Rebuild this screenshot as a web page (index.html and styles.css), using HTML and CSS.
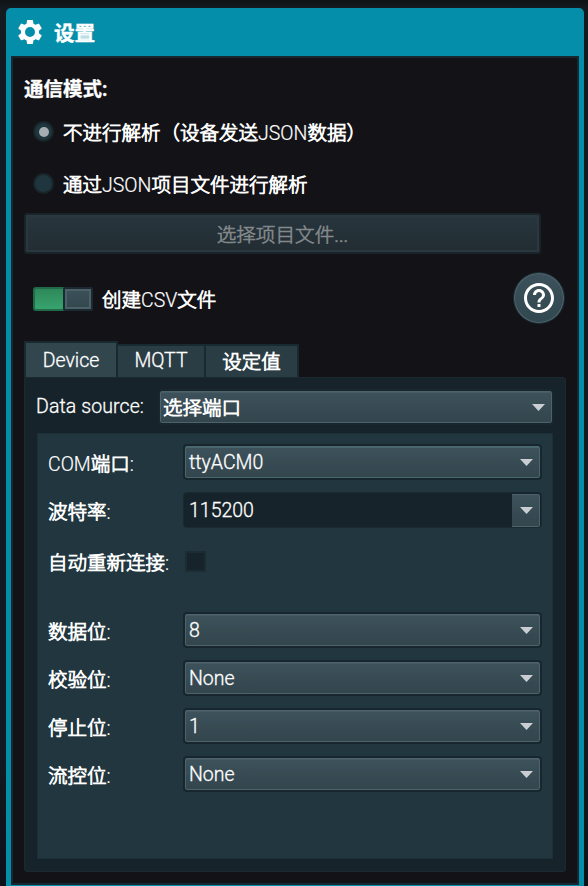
FILE: index.html
```html
<!DOCTYPE html>
<html lang="zh-CN">
<head>
<meta charset="utf-8">
<title>设置</title>
<link rel="stylesheet" href="styles.css">
</head>
<body>
<main class="window">
  <header class="titlebar">
    <svg class="gear" viewBox="0 0 24 24"><path d="M19.14 12.94c.04-.3.06-.61.06-.94 0-.32-.02-.64-.07-.94l2.03-1.58a.49.49 0 0 0 .12-.61l-1.92-3.32a.488.488 0 0 0-.59-.22l-2.39.96c-.5-.38-1.03-.7-1.62-.94l-.36-2.54a.484.484 0 0 0-.48-.41h-3.84c-.24 0-.43.17-.47.41l-.36 2.54c-.59.24-1.13.57-1.62.94l-2.39-.96c-.22-.08-.47 0-.59.22L2.74 8.87c-.12.21-.08.47.12.61l2.03 1.58c-.05.3-.09.63-.09.94s.02.64.07.94l-2.03 1.58a.49.49 0 0 0-.12.61l1.92 3.32c.12.22.37.29.59.22l2.39-.96c.5.38 1.03.7 1.62.94l.36 2.54c.05.24.24.41.48.41h3.84c.24 0 .44-.17.47-.41l.36-2.54c.59-.24 1.13-.56 1.62-.94l2.39.96c.22.08.47 0 .59-.22l1.92-3.32c.12-.22.07-.47-.12-.61l-2.01-1.58zM12 16a4 4 0 1 1 0-8 4 4 0 0 1 0 8z"/></svg>
    <h1 class="title">设置</h1>
  </header>
  <section class="body">
    <h2 class="heading">通信模式:</h2>
    <div class="radio-row"><span class="radio checked"></span><span class="cjk">不进行解析（设备发送<b>JSON</b>数据）</span></div>
    <div class="radio-row"><span class="radio"></span><span class="cjk">通过<b>JSON</b>项目文件进行解析</span></div>
    <div class="file-button">选择项目文件...</div>
    <div class="csv-row">
      <span class="switch"><span class="knob"></span></span>
      <span class="cjk csv-label">创建<b>CSV</b>文件</span>
      <span class="help"><svg viewBox="0 0 24 24"><path d="M11 18h2v-2h-2v2zm1-16C6.48 2 2 6.48 2 12s4.48 10 10 10 10-4.480 10-10S17.520 2 12 2zm0 18c-4.410 0-8-3.590-8-8s3.590-8 8-8 8 3.590 8 8-3.590 8-8 8zm0-14c-2.210 0-4 1.790-4 4h2c0-1.100.900-2 2-2s2 .900 2 2c0 2-3 1.750-3 5h2c0-2.250 3-2.500 3-5 0-2.210-1.790-4-4-4z"/></svg></span>
    </div>
    <nav class="tabs">
      <span class="tab active">Device</span>
      <span class="tab mqtt">MQTT</span>
      <span class="tab cjk preset">设定值</span>
    </nav>
    <div class="pane">
      <div class="source"><span class="latin">Data source:</span><div class="select cjk wide"><span class="value">选择端口</span><i class="arrow"></i></div></div>
      <div class="form">
        <div class="row"><span class="cjk"><b>COM</b>端口<b>:</b></span><div class="select focus"><span class="value">ttyACM0</span><i class="arrow"></i></div></div>
        <div class="row"><span class="cjk">波特率<b>:</b></span><div class="combo"><span class="value">115200</span><span class="drop"><i class="arrow"></i></span></div></div>
        <div class="row auto"><span class="cjk">自动重新连接<b>:</b></span><span class="check"></span></div>
        <div class="row"><span class="cjk">数据位<b>:</b></span><div class="select"><span class="value">8</span><i class="arrow"></i></div></div>
        <div class="row"><span class="cjk">校验位<b>:</b></span><div class="select"><span class="value">None</span><i class="arrow"></i></div></div>
        <div class="row"><span class="cjk">停止位<b>:</b></span><div class="select"><span class="value">1</span><i class="arrow"></i></div></div>
        <div class="row"><span class="cjk">流控位<b>:</b></span><div class="select"><span class="value">None</span><i class="arrow"></i></div></div>
      </div>
    </div>
  </section>
</main>
</body>
</html>
```
FILE: styles.css
```css
* { box-sizing: border-box; }
body {
  margin: 0;
  height: 886px;
  padding: 8px 4px 0 6px;
  overflow: hidden;
  background: linear-gradient(#0e1316, #141b20 8px, #111a20 60px, #111a20 760px, #0b1119);
  color: #fff;
  font: 300 19.5px/24px Roboto, "Noto Sans CJK SC", sans-serif;
  -webkit-text-stroke: .3px currentColor;
}
.window {
  height: 882px;
  padding: 0 5px;
  border-radius: 5px;
  background: #058ea9;
}
.titlebar { display: flex; align-items: center; height: 48px; padding-left: 4px; }
.gear { width: 30px; height: 30px; fill: #fff; }
.title { margin: 3px 0 0 9px; font-size: 20.6px; line-height: 24px; font-weight: 700; -webkit-text-stroke: .4px currentColor; }
.body {
  height: 829px;
  padding: 20px 11px 0;
  border: 2px solid #172831;
  background: #131217;
}
.heading { margin: 0; font-size: 19.5px; line-height: 24px; font-weight: 700; -webkit-text-stroke: .3px currentColor; }
.cjk { font-size: 19.5px; -webkit-text-stroke: .85px currentColor; }
.cjk b { font-weight: 300; -webkit-text-stroke: .2px currentColor; }
.radio-row { display: flex; align-items: center; height: 24px; margin-top: 20px; padding-left: 9px; gap: 9px; }
.radio-row + .radio-row { margin-top: 28px; }
.radio {
  display: grid;
  place-items: center;
  width: 21px;
  height: 21px;
  margin-top: -5px;
  border: 2px solid #182529;
  border-radius: 50%;
  background: #20363f;
}
.checked::after { content: ""; width: 10px; height: 10px; border-radius: 50%; background: #a7adb0; }
.file-button {
  width: 517px;
  height: 41px;
  margin-top: 15px;
  border: 2px solid #18232a;
  border-radius: 3px;
  background: linear-gradient(#27353d, #222d32);
  box-shadow: inset 0 0 0 2px #2b3840;
  color: #84898c;
  font-size: 19.6px;
  line-height: 41px;
  text-align: center;
  -webkit-text-stroke: .6px currentColor;
}
.csv-row { display: flex; align-items: center; height: 52px; margin-top: 18px; padding-left: 9px; }
.switch {
  display: flex;
  justify-content: flex-end;
  width: 60px;
  height: 24px;
  margin-top: 1px;
  border: 2px solid #216b49;
  border-right-color: #1c2b31;
  border-radius: 3px;
  background: linear-gradient(#2e8859, #37a46e);
}
.knob {
  width: 30px;
  height: 24px;
  margin: -2px -2px 0 0;
  border: 2px solid #1b2a31;
  border-radius: 2px;
  background: linear-gradient(#3b515a, #33464e);
  box-shadow: inset 0 0 0 2px #4c6068;
}
.csv-label { margin: 5px 0 0 9px; }
.help {
  display: grid;
  place-items: center;
  width: 52px;
  height: 52px;
  margin: 0 1px 0 auto;
  border: 1px solid #1b2d33;
  border-radius: 50%;
  background: linear-gradient(#3c515b, #324850);
  box-shadow: inset 0 0 0 1px #52666e;
}
.help svg { width: 36px; height: 36px; fill: #fff; }
.tabs { display: flex; align-items: flex-end; height: 36px; margin-top: 17px; }
.tab {
  height: 33px;
  border: 2px solid #18292f;
  border-width: 2px 2px 0 0;
  background: #2b3d44;
  line-height: 30px;
  text-align: center;
}
.active { width: 94px; height: 36px; border-left-width: 2px; background: #32464e; line-height: 36px; }
.mqtt { width: 88px; }
.preset { width: 93px; line-height: 33px; }
.pane {
  width: 542px;
  height: 495px;
  padding: 11px 13px 0 12px;
  border: 1px solid #1a2a30;
  border-radius: 0 3px 3px 3px;
  background: #16232a;
}
.source { display: flex; align-items: center; justify-content: space-between; height: 36px; margin: 0 -2px 8px -1px; }
.latin { margin-top: -1px; letter-spacing: .1px; }
.select {
  display: flex;
  align-items: center;
  justify-content: space-between;
  height: 36px;
  padding: 0 7px 0 4px;
  border: 2px solid #18262d;
  border-radius: 4px;
  background: linear-gradient(#3d525b, #33454d);
  box-shadow: inset 0 0 0 1px #4d626a, inset 0 2px #465b63;
}
.select .value, .combo .value { margin-top: 2px; }
.focus { box-shadow: inset 0 0 0 1px #4a666e, inset 0 2px #49686e; }
.wide { width: 396px; padding-left: 3px; }
.wide .value { margin-top: 4px; }
.arrow { width: 13px; height: 7px; margin-top: 1px; background: #c8ced1; clip-path: polygon(0 0, 100% 0, 50% 100%); }
.form {
  height: 426px;
  margin-right: -1px;
  padding: 10px 10px 0;
  border: 1px solid #1d3037;
  background: #21363e;
}
.row { display: grid; grid-template-columns: 135px 359px; align-items: center; height: 36px; margin-bottom: 12px; }
.row > .cjk { margin-top: 5px; }
.combo { display: flex; justify-content: space-between; align-items: center; height: 36px; padding: 1px; border: 1px solid #1a2a31; border-radius: 4px; background: #17232a; }
.combo .value { padding-left: 4px; }
.drop { display: grid; place-items: center; width: 28px; height: 33px; border: 1px solid #4d626a; border-left: 0; border-radius: 0 2px 2px 0; background: linear-gradient(#3d525b, #33454d); }
.drop .arrow { margin-left: 2px; }
.auto { height: 42px; margin-bottom: 30px; }
.check { width: 21px; height: 21px; margin-left: 2px; border: 2px solid #1b2c33; background: #17232a; }
```
